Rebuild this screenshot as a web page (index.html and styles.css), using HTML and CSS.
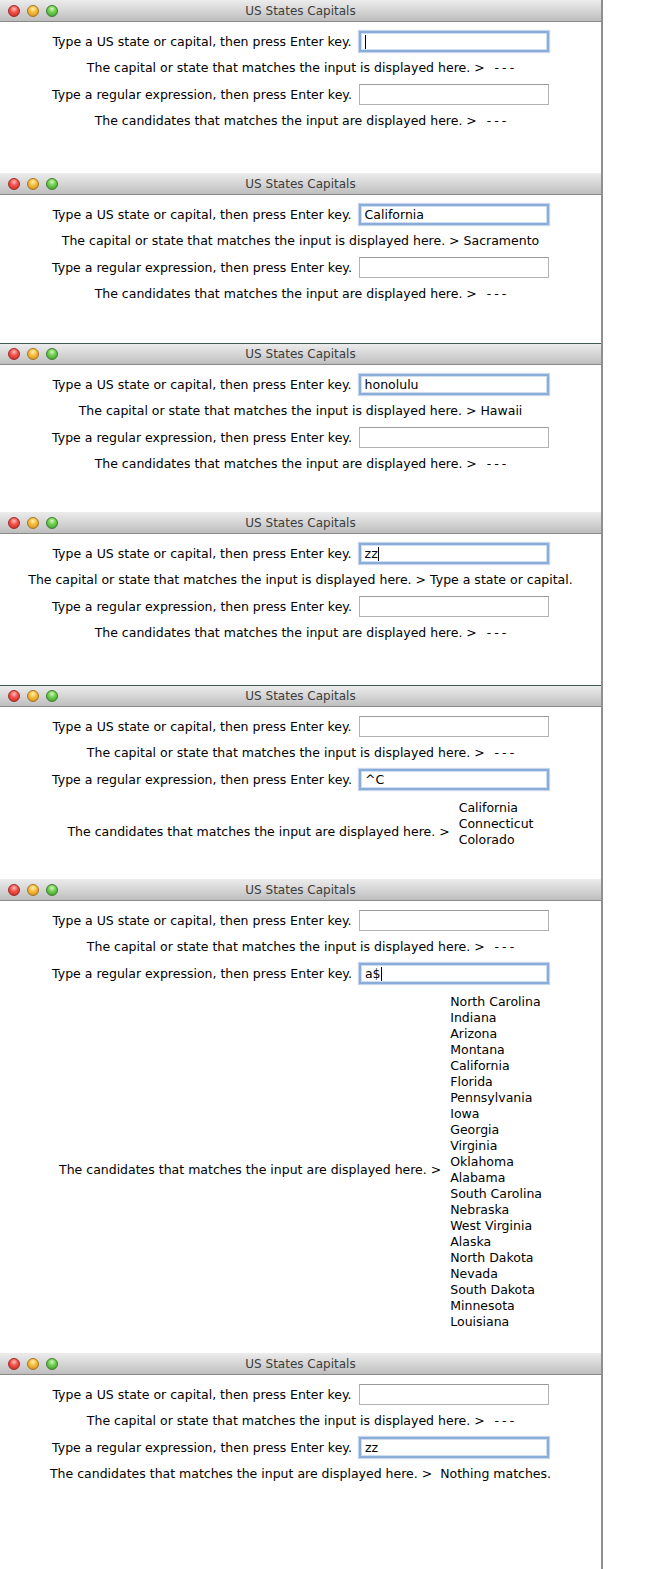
FILE: index.html
```html
<!DOCTYPE html>
<html lang="en">
<head>
<meta charset="utf-8">
<title>US States Capitals</title>
<link rel="stylesheet" href="styles.css">
</head>
<body>
<div class="page">

  <section class="window h1">
    <div class="titlebar">
      <div class="lights"><span class="light red"></span><span class="light yellow"></span><span class="light green"></span></div>
      <div class="title">US States Capitals</div>
      <div></div>
    </div>
    <div class="content">
      <div class="row"><span class="label">Type a US state or capital, then press Enter key.</span><div class="field focused"><span class="caret"></span></div></div>
      <div class="row text"><span>The capital or state that matches the input is displayed here. &gt;</span><span class="dash">---</span></div>
      <div class="row"><span class="label">Type a regular expression, then press Enter key.</span><div class="field"></div></div>
      <div class="row text"><span>The candidates that matches the input are displayed here. &gt;</span><span class="dash">---</span></div>
    </div>
  </section>

  <section class="window h2">
    <div class="titlebar">
      <div class="lights"><span class="light red"></span><span class="light yellow"></span><span class="light green"></span></div>
      <div class="title">US States Capitals</div>
      <div></div>
    </div>
    <div class="content">
      <div class="row"><span class="label">Type a US state or capital, then press Enter key.</span><div class="field focused">California</div></div>
      <div class="row text"><span>The capital or state that matches the input is displayed here. &gt;</span><span>Sacramento</span></div>
      <div class="row"><span class="label">Type a regular expression, then press Enter key.</span><div class="field"></div></div>
      <div class="row text"><span>The candidates that matches the input are displayed here. &gt;</span><span class="dash">---</span></div>
    </div>
  </section>

  <section class="window h3 dark-top">
    <div class="titlebar">
      <div class="lights"><span class="light red"></span><span class="light yellow"></span><span class="light green"></span></div>
      <div class="title">US States Capitals</div>
      <div></div>
    </div>
    <div class="content">
      <div class="row"><span class="label">Type a US state or capital, then press Enter key.</span><div class="field focused">honolulu</div></div>
      <div class="row text"><span>The capital or state that matches the input is displayed here. &gt;</span><span>Hawaii</span></div>
      <div class="row"><span class="label">Type a regular expression, then press Enter key.</span><div class="field"></div></div>
      <div class="row text"><span>The candidates that matches the input are displayed here. &gt;</span><span class="dash">---</span></div>
    </div>
  </section>

  <section class="window h4">
    <div class="titlebar">
      <div class="lights"><span class="light red"></span><span class="light yellow"></span><span class="light green"></span></div>
      <div class="title">US States Capitals</div>
      <div></div>
    </div>
    <div class="content">
      <div class="row"><span class="label">Type a US state or capital, then press Enter key.</span><div class="field focused">zz<span class="caret"></span></div></div>
      <div class="row text"><span>The capital or state that matches the input is displayed here. &gt;</span><span>Type a state or capital.</span></div>
      <div class="row"><span class="label">Type a regular expression, then press Enter key.</span><div class="field"></div></div>
      <div class="row text"><span>The candidates that matches the input are displayed here. &gt;</span><span class="dash">---</span></div>
    </div>
  </section>

  <section class="window h5 dark-top">
    <div class="titlebar">
      <div class="lights"><span class="light red"></span><span class="light yellow"></span><span class="light green"></span></div>
      <div class="title">US States Capitals</div>
      <div></div>
    </div>
    <div class="content">
      <div class="row"><span class="label">Type a US state or capital, then press Enter key.</span><div class="field"></div></div>
      <div class="row text"><span>The capital or state that matches the input is displayed here. &gt;</span><span class="dash">---</span></div>
      <div class="row"><span class="label">Type a regular expression, then press Enter key.</span><div class="field focused">^C</div></div>
      <div class="row list-row"><span class="list-label">The candidates that matches the input are displayed here. &gt;</span>
        <ul class="list"><li>California</li><li>Connecticut</li><li>Colorado</li></ul>
      </div>
    </div>
  </section>

  <section class="window h6">
    <div class="titlebar">
      <div class="lights"><span class="light red"></span><span class="light yellow"></span><span class="light green"></span></div>
      <div class="title">US States Capitals</div>
      <div></div>
    </div>
    <div class="content">
      <div class="row"><span class="label">Type a US state or capital, then press Enter key.</span><div class="field"></div></div>
      <div class="row text"><span>The capital or state that matches the input is displayed here. &gt;</span><span class="dash">---</span></div>
      <div class="row"><span class="label">Type a regular expression, then press Enter key.</span><div class="field focused">a$<span class="caret"></span></div></div>
      <div class="row list-row"><span class="list-label">The candidates that matches the input are displayed here. &gt;</span>
        <ul class="list">
          <li>North Carolina</li><li>Indiana</li><li>Arizona</li><li>Montana</li><li>California</li><li>Florida</li><li>Pennsylvania</li><li>Iowa</li><li>Georgia</li><li>Virginia</li><li>Oklahoma</li><li>Alabama</li><li>South Carolina</li><li>Nebraska</li><li>West Virginia</li><li>Alaska</li><li>North Dakota</li><li>Nevada</li><li>South Dakota</li><li>Minnesota</li><li>Louisiana</li>
        </ul>
      </div>
    </div>
  </section>

  <section class="window h7">
    <div class="titlebar">
      <div class="lights"><span class="light red"></span><span class="light yellow"></span><span class="light green"></span></div>
      <div class="title">US States Capitals</div>
      <div></div>
    </div>
    <div class="content">
      <div class="row"><span class="label">Type a US state or capital, then press Enter key.</span><div class="field"></div></div>
      <div class="row text"><span>The capital or state that matches the input is displayed here. &gt;</span><span class="dash">---</span></div>
      <div class="row"><span class="label">Type a regular expression, then press Enter key.</span><div class="field focused">zz</div></div>
      <div class="row text"><span>The candidates that matches the input are displayed here. &gt;</span><span class="none">Nothing matches.</span></div>
    </div>
  </section>

</div>
</body>
</html>
```

FILE: styles.css
```css
html, body {
  margin: 0;
  padding: 0;
  background: #ffffff;
}

body {
  font-family: "DejaVu Sans", "Liberation Sans", sans-serif;
  font-size: 12.5px;
  color: #000;
}

.page {
  width: 601px;
  min-height: 1569px;
  border-right: 2px solid #8f8f8f;
}

.window {
  background: #fff;
  overflow: hidden;
}

.h1 { height: 173px; }
.h2 { height: 170px; }
.h3 { height: 169px; }
.h4 { height: 173px; }
.h5 { height: 194px; }
.h6 { height: 474px; }
.h7 { height: 216px; }

.titlebar {
  height: 21px;
  border-bottom: 1px solid #8a8a8a;
  background: linear-gradient(#ececec, #d8d8d8 45%, #bebebe);
  display: grid;
  grid-template-columns: 1fr auto 1fr;
  align-items: center;
}

.dark-top .titlebar {
  border-top: 1px solid #3f5a52;
  height: 20px;
}

.lights {
  display: flex;
  align-items: center;
  gap: 7px;
  padding-left: 8px;
}

.light {
  width: 10px;
  height: 10px;
  border-radius: 50%;
  display: block;
}

.red {
  background: radial-gradient(circle at 50% 30%, #ffc2bd 0, #f2564f 40%, #c4221b 100%);
  border: 1px solid #9c2b25;
}

.yellow {
  background: radial-gradient(circle at 50% 30%, #fff0b5 0, #f7bf3e 40%, #c9861a 100%);
  border: 1px solid #a6731d;
}

.green {
  background: radial-gradient(circle at 50% 30%, #d3f7bd 0, #72d052 40%, #3a922a 100%);
  border: 1px solid #3d7d2d;
}

.title {
  font-size: 12px;
  color: #3c3c3c;
  white-space: nowrap;
}

.content {
  display: flex;
  flex-direction: column;
  align-items: center;
  padding-top: 9px;
  gap: 8px;
}

.row {
  display: flex;
  align-items: center;
  gap: 7px;
  white-space: nowrap;
}

.row.text {
  height: 16px;
  line-height: 16px;
  gap: 4px;
}

.dash {
  letter-spacing: 3px;
  margin-left: 6px;
  margin-right: -3px;
}

.none {
  margin-left: 4px;
}

.field {
  width: 190px;
  height: 21px;
  box-sizing: border-box;
  border: 1px solid #b2b2b2;
  border-top-color: #9a9a9a;
  background: #fff;
  padding-left: 5px;
  display: flex;
  align-items: center;
  line-height: 16px;
}

.field.focused {
  border: 2px solid #8aacd9;
  box-shadow: inset 0 0 0 1px #d0def2, 0 0 1px 1px rgba(130, 165, 215, 0.45);
  padding-left: 4px;
}

.caret {
  display: inline-block;
  width: 1px;
  height: 14px;
  background: #000;
}

.list-row {
  align-items: center;
  gap: 9px;
}

.list-label {
  padding-top: 17px;
  line-height: 16px;
}

.list {
  list-style: none;
  margin: 0;
  padding: 0;
  padding-top: 2px;
  line-height: 16px;
}
```
